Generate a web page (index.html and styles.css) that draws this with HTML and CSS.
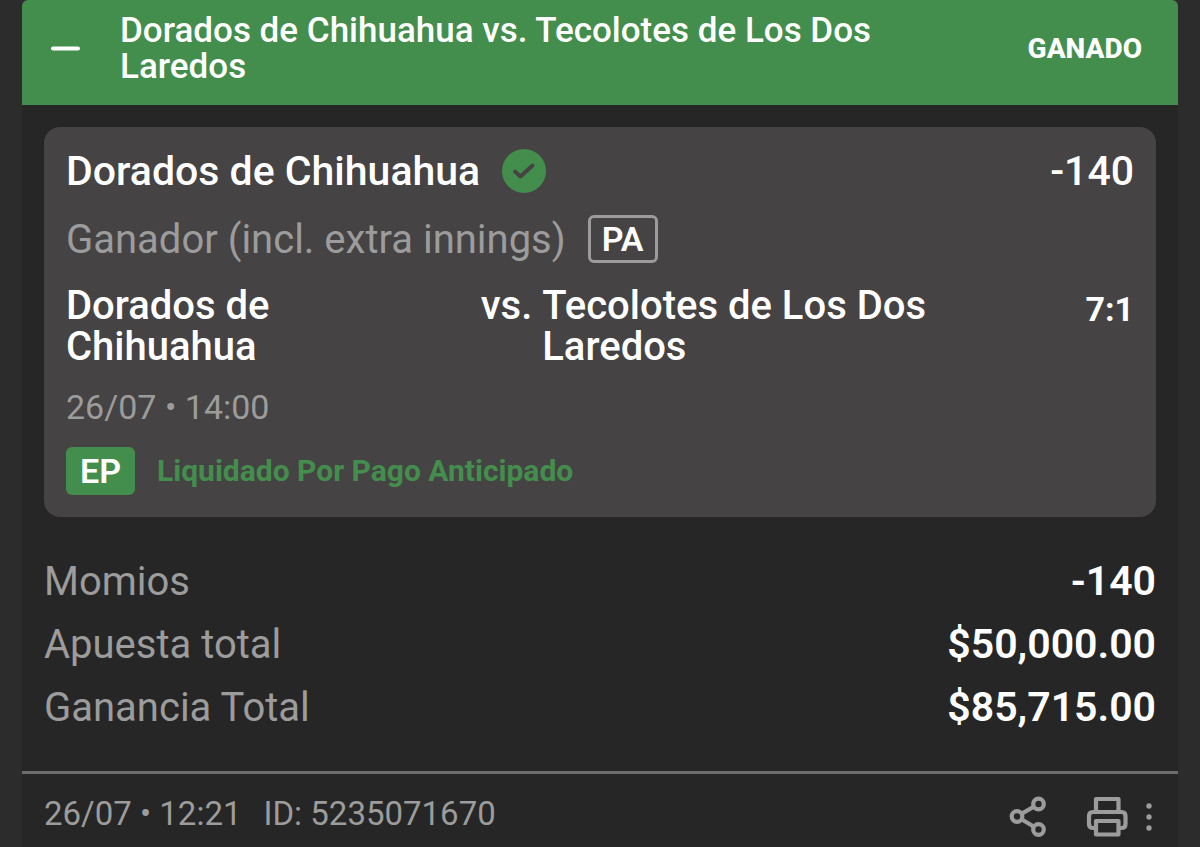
FILE: index.html
```html
<!DOCTYPE html>
<html lang="es">
<head>
    <meta charset="UTF-8">
    <meta name="viewport" content="width=device-width, initial-scale=1.0">
    <title>Dorados de Chihuahua vs. Tecolotes de Los Dos Laredos</title>
    <link rel="stylesheet" href="styles.css">
</head>
<body>
    <main class="ticket">
        <header class="ticket-header">
            <button type="button" class="icon-button" aria-label="Contraer">
                <svg width="30" height="30" viewBox="0 0 30 30"><path d="M3 14.500h25" stroke="#fff" stroke-width="4" stroke-linecap="round"/></svg>
            </button>
            <h1 class="ticket-title">Dorados de Chihuahua vs. Tecolotes de Los Dos Laredos</h1>
            <strong class="status">GANADO</strong>
        </header>

        <div class="ticket-body">
            <section class="bet">
                <div class="row pick">
                    <h2 class="pick-name">Dorados de Chihuahua</h2>
                    <svg width="44" height="44" viewBox="0 0 44 44" aria-hidden="true">
                        <circle cx="22" cy="22" r="22" fill="#448e4d"/>
                        <path d="M13 22.500l5.500 5L30.500 16.500" fill="none" stroke="#454344" stroke-width="4" stroke-linecap="round" stroke-linejoin="round"/>
                    </svg>
                    <span class="odds">-140</span>
                </div>
                <div class="row">
                    <span class="market">Ganador (incl. extra innings)</span>
                    <span class="badge badge-outline">PA</span>
                </div>
                <div class="teams">
                    <span class="team">Dorados de Chihuahua</span>
                    <span>vs.</span>
                    <span class="team">Tecolotes de Los Dos Laredos</span>
                    <span class="score">7:1</span>
                </div>
                <time class="date">26/07 • 14:00</time>
                <div class="row">
                    <span class="badge badge-green">EP</span>
                    <strong class="settled">Liquidado Por Pago Anticipado</strong>
                </div>
            </section>

            <dl class="totals">
                <div class="total"><dt>Momios</dt><dd>-140</dd></div>
                <div class="total"><dt>Apuesta total</dt><dd>$50,000.00</dd></div>
                <div class="total"><dt>Ganancia Total</dt><dd>$85,715.00</dd></div>
            </dl>
        </div>

        <footer class="ticket-footer">
            <time>26/07 • 12:21</time>
            <span>ID: 5235071670</span>
            <div class="actions">
                <button type="button" class="icon-button" aria-label="Compartir">
                    <svg width="38" height="42" viewBox="0 0 38 42" fill="none" stroke="#9c9c9c" stroke-width="4.2">
                        <circle cx="9" cy="20.5" r="5.3"/>
                        <circle cx="30.5" cy="8" r="5.3"/>
                        <circle cx="30.5" cy="33.5" r="5.3"/>
                        <path d="M13.5 17.8L26 10.6M13.5 23.2L26 30.8"/>
                    </svg>
                </button>
                <button type="button" class="icon-button" aria-label="Imprimir">
                    <svg width="42" height="42" viewBox="0 0 42 42" fill="none" stroke="#9c9c9c" stroke-width="4.2" stroke-linejoin="round">
                        <path d="M10 16V3h22.5v13"/>
                        <path d="M9.500 32H7q-4 0-4-4v-8q0-4 4-4h28.500q4 0 4 4v8q0 4-4 4h-3"/>
                        <path d="M10 25h22.500v13.500H10z"/>
                    </svg>
                </button>
                <button type="button" class="icon-button" aria-label="Más opciones">
                    <svg width="6" height="42" viewBox="0 0 6 42" fill="#9c9c9c">
                        <circle cx="3" cy="10" r="2.7"/>
                        <circle cx="3" cy="21" r="2.7"/>
                        <circle cx="3" cy="32" r="2.7"/>
                    </svg>
                </button>
            </div>
        </footer>
    </main>
</body>
</html>
```
FILE: styles.css
```css
* {
    box-sizing: border-box;
}
body {
    margin: 0;
    padding: 0 22px;
    background-color: #2c2c2c;
    color: #fff;
    font-family: Roboto, "Liberation Sans", sans-serif;
    font-size: 40px;
    line-height: 41px;
}
h1, h2, dl, dd {
    margin: 0;
}
svg {
    display: block;
}
.ticket {
    min-height: 100vh;
    background-color: #262626;
    border-radius: 6px 6px 0 0;
    overflow: hidden;
}
.ticket-header {
    display: flex;
    align-items: center;
    padding: 13px 36px 20px 28px;
    background-color: #448e4d;
}
.icon-button {
    padding: 0;
    border: none;
    background: none;
    cursor: pointer;
}
.ticket-title {
    flex: 1;
    margin: 0 110px 0 40px;
    font-size: 35px;
    line-height: 36px;
    font-weight: 500;
}
.status {
    font-size: 28px;
    line-height: 36px;
    font-weight: 800;
}
.ticket-body {
    padding: 22px 22px 43px;
}
.bet {
    display: flex;
    flex-direction: column;
    gap: 22px;
    padding: 22px;
    border-radius: 16px;
    background-color: #454344;
}
.row {
    display: flex;
    align-items: center;
    gap: 22px;
}
.pick {
    font-size: 41px;
    line-height: 40px;
    font-weight: 500;
}
.pick-name {
    font-size: 41px;
    font-weight: 500;
}
.odds {
    margin-left: auto;
}
.market {
    color: #9c9c9c;
}
.badge {
    padding: 0 11px;
    border: 3px solid #448e4d;
    border-radius: 6px;
    font-size: 34px;
    line-height: 42px;
    font-weight: 600;
}
.badge-outline {
    border-color: #9c9c9c;
}
.badge-green {
    background-color: #448e4d;
}
.teams {
    display: grid;
    grid-template-columns: 1fr auto 1fr 177px;
    column-gap: 10px;
    font-weight: 500;
}
.team {
    padding-right: 16px;
}
.score {
    font-size: 34px;
    line-height: 48px;
    font-weight: 700;
    text-align: right;
}
.date {
    color: #9c9c9c;
    font-size: 34px;
    line-height: 36px;
}
.settled {
    color: #448e4d;
    font-size: 30px;
    line-height: 36px;
}
.totals {
    display: flex;
    flex-direction: column;
    gap: 22px;
    margin-top: 44px;
}
.total {
    display: flex;
    justify-content: space-between;
}
.total dt {
    color: #9c9c9c;
}
.total dd {
    font-size: 41px;
    font-weight: 600;
}
.ticket-footer {
    display: flex;
    align-items: flex-start;
    gap: 22px;
    padding: 22px 26px 8px 22px;
    border-top: 3px solid #6c6c6c;
    color: #9c9c9c;
    font-size: 33px;
    line-height: 36px;
}
.actions {
    display: flex;
    gap: 18px;
    margin-left: auto;
}
.actions .icon-button:first-child {
    margin-right: 22px;
}
```
